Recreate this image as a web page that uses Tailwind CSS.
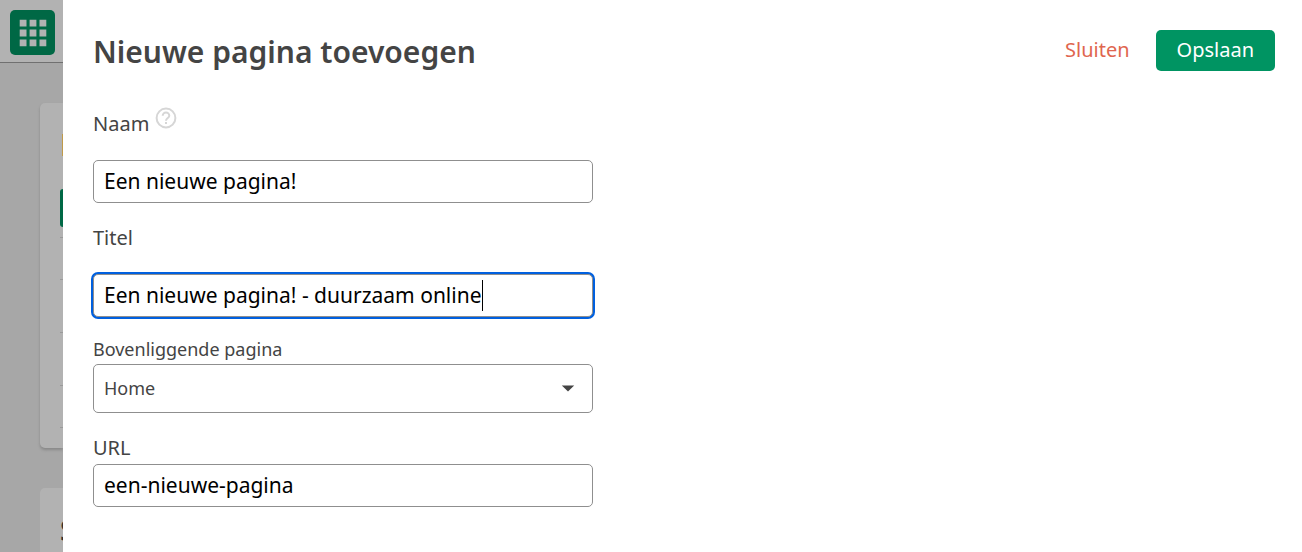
<!DOCTYPE html>
<html lang="nl">
<head>
<meta charset="utf-8">
<meta name="viewport" content="width=device-width, initial-scale=1">
<title>Nieuwe pagina toevoegen</title>
<script src="https://cdn.jsdelivr.net/npm/@tailwindcss/browser@4"></script>
</head>
<body class="flex min-h-screen overflow-hidden bg-white font-['Noto_Sans','Open_Sans',sans-serif] text-[#444]">
  <!-- Dimmed page behind the drawer -->
  <aside class="flex h-screen w-[63px] shrink-0 flex-col overflow-hidden bg-[#a7a7a7]">
    <div class="h-[63px] shrink-0 border-b border-[#707070] bg-[#b2b2b2] pt-2.5 pl-2.5">
      <button type="button" aria-label="Menu" class="flex size-[45px] items-center justify-center rounded-[5px] bg-[#006845]">
        <svg class="size-7" viewBox="0 0 28 28" fill="#b2b2b2" aria-hidden="true">
          <path d="M.7.7h6.8v6.8H.7zM10.6.7h6.8v6.8h-6.8zM20.5.7h6.8v6.8h-6.8zM.7 10.6h6.8v6.8H.7zM10.6 10.6h6.8v6.8h-6.8zM20.5 10.6h6.8v6.8h-6.8zM.7 20.5h6.8v6.8H.7zM10.6 20.5h6.8v6.8h-6.8zM20.5 20.5h6.8v6.8h-6.8z"/>
        </svg>
      </button>
    </div>
    <div class="mt-10 ml-10 flex h-[345px] shrink-0 flex-col rounded-l-[5px] bg-[#b2b2b2] pl-5 shadow-[0_2px_3px_#888]">
      <div class="mt-[31px] ml-0.5 h-[22px] w-px bg-[#c09a48]"></div>
      <div class="mt-[33px] h-[38px] rounded-l-[5px] bg-[#006845]"></div>
      <div class="mt-2.5 h-px bg-[#9a9a9a]"></div>
      <div class="mt-[41px] h-px bg-[#9a9a9a]"></div>
      <div class="mt-[52px] h-px bg-[#9a9a9a]"></div>
      <div class="mt-[52px] h-px bg-[#9a9a9a]"></div>
      <div class="mt-[41px] h-px bg-[#9a9a9a]"></div>
    </div>
    <div class="mt-10 ml-10 flex-1 overflow-hidden rounded-tl-[5px] bg-[#b2b2b2] pt-6 pl-5 text-[28px] leading-9 font-semibold text-[#303030]">S</div>
  </aside>

  <main class="min-w-0 flex-1 pt-[30px] pr-[27px] pb-10 pl-[30px]">
    <header class="flex items-start justify-between">
      <h1 class="text-3xl leading-[44px] font-semibold">Nieuwe pagina toevoegen</h1>
      <div class="flex items-center gap-[26px] text-xl">
        <button type="button" class="pb-0.5 text-[#e0664f]">Sluiten</button>
        <button type="button" class="h-[41px] rounded-[5px] bg-[#009462] px-[21px] pb-0.5 text-white">Opslaan</button>
      </div>
    </header>

    <form class="flex max-w-[500px] flex-col">
      <div class="mt-[33px] flex items-start gap-1.5">
        <label for="naam" class="pt-[3px] text-xl leading-7">Naam</label>
        <svg class="size-[22px] text-[#d6d6d6]" viewBox="0 0 22 22" fill="none" stroke="currentColor" stroke-width="2" aria-hidden="true">
          <circle cx="11" cy="11" r="9.4"/>
          <path d="M7.7 8.8a3.3 3.3 0 0 1 6.6 0c0 2.2-3.3 2.4-3.3 5"/>
          <path d="M11 15v2"/>
        </svg>
      </div>
      <input id="naam" type="text" value="Een nieuwe pagina!" class="mt-[22px] h-[43px] w-full rounded-[5px] border border-[#8f8f8f] bg-white px-2.5 pb-0.5 text-[21px] text-black outline-none">

      <label for="titel" class="mt-[21px] text-xl leading-7">Titel</label>
      <div class="relative mt-[22px]">
        <input id="titel" type="text" value="Een nieuwe pagina! - duurzaam online" class="block h-[43px] w-full rounded-[5px] border border-[#8f8f8f] bg-white px-2.5 pb-0.5 text-[21px] text-black caret-transparent ring-2 ring-[#0060df] outline-none">
        <span class="absolute top-1.5 left-[389px] h-[31px] w-px bg-black" aria-hidden="true"></span>
      </div>

      <label for="ouder" class="mt-[18px] mb-px text-lg leading-7">Bovenliggende pagina</label>
      <div class="relative">
        <select id="ouder" class="block h-[49px] w-full appearance-none rounded-[5px] border border-[#8f8f8f] bg-white px-2.5 pb-0.5 text-lg text-[#444] outline-none">
          <option>Home</option>
        </select>
        <svg class="pointer-events-none absolute top-[21px] right-[18px] h-[7px] w-[14px]" viewBox="0 0 14 7" fill="#444" aria-hidden="true"><path d="M.8.4h12.4L7 6.6z"/></svg>
      </div>

      <label for="url" class="mt-[21px] mb-0.5 text-xl leading-7">URL</label>
      <input id="url" type="text" value="een-nieuwe-pagina" class="h-[43px] w-full rounded-[5px] border border-[#8f8f8f] bg-white px-2.5 pb-0.5 text-[21px] text-black outline-none">
    </form>
  </main>
</body>
</html>
